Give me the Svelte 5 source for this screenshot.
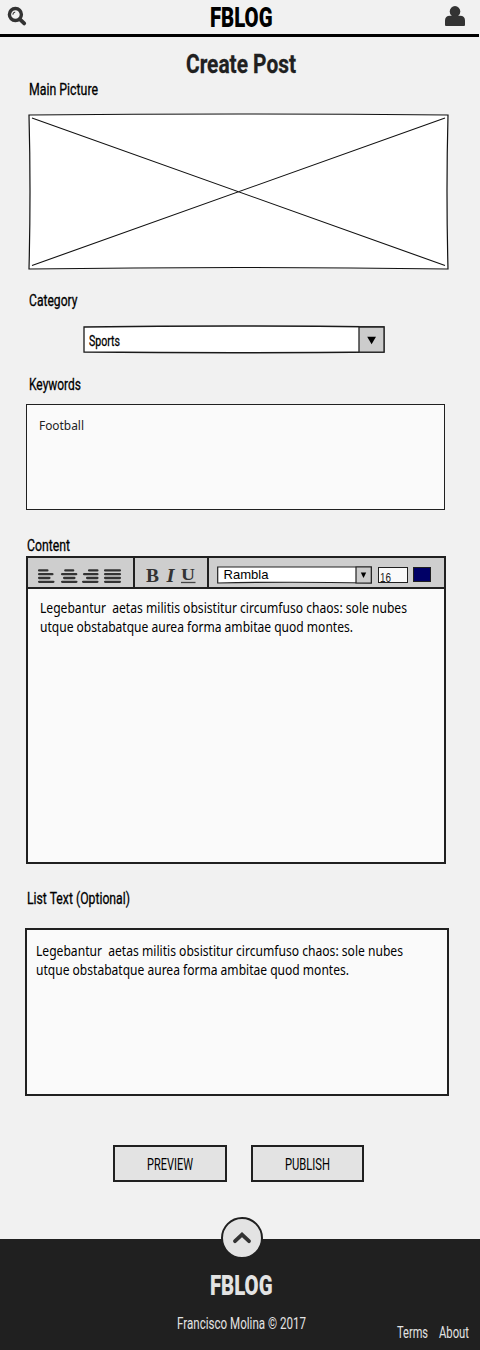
<script>
  const aligns = [
    { w: 23, rows: [[0, 10], [0, 15], [0, 12], [0, 16]] },
    { w: 21, rows: [[3.2, 12.8], [0, 15.8], [2, 14], [0, 16]] },
    { w: 22, rows: [[6, 16], [1, 16], [4, 16], [0, 16]] },
    { w: 17, rows: [[0, 16.5], [0, 16.5], [0, 16.5], [0, 16.5]] }
  ];
  const lines = [
    ['Legebantur  aetas militis obsistitur circumfuso chaos: sole nubes', 367],
    ['utque obstabatque aurea forma ambitae quod montes.', 313]
  ];
</script>

{#snippet fit(text, width, height, baseline, cls)}
  <svg class="fit {cls}" {width} {height}>
    <text x="0" y={baseline} textLength={width} lengthAdjust="spacingAndGlyphs">{text}</text>
  </svg>
{/snippet}

{#snippet paragraph()}
  {#each lines as [text, width]}
    {@render fit(text, width, 19, 14, 'copy')}
  {/each}
{/snippet}

<div class="page">
  <header>
    <svg class="search" width="20" height="20" viewBox="0 0 20 20">
      <circle cx="8.4" cy="7.5" r="6" fill="none" stroke="#333" stroke-width="3.4" />
      <path d="M5.8 7.6Q6 5.4 8.2 5" fill="none" stroke="#333" stroke-width="1.1" />
      <path d="M13 12.3L17.2 16.4" stroke="#333" stroke-width="3.8" stroke-linecap="round" />
    </svg>
    {@render fit('FBLOG', 62.5, 34, 26.8, 'logo')}
    <svg class="user" width="20" height="20" viewBox="0 0 20 20">
      <circle cx="10" cy="5.4" r="5.3" fill="#333" />
      <path d="M0 19V14.500Q0 10 5 9.800H15Q20 10 20 14.500V19Q20 20 19 20H1Q0 20 0 19Z" fill="#333" />
    </svg>
  </header>

  <main>
    <div class="title">{@render fit('Create Post', 110, 43, 35.5, 'heading')}</div>

    <section class="picture-field">
      {@render fit('Main Picture', 69, 33, 14.7, 'label')}
      <svg class="picture" width="422" height="158" viewBox="0 0 422 158">
        <path d="M2 2Q211 0 421 2Q419 78 421 156Q211 153 2 156Q4 78 2 2Z" fill="#fff" stroke="#111" stroke-width="1.2" />
        <path d="M5 5L418 152.500M418 5L5 152.500" fill="none" stroke="#111" stroke-width="1.1" />
      </svg>
    </section>

    <section class="category-field">
      {@render fit('Category', 48.5, 33, 15.4, 'label')}
      <div class="select">
        <svg class="frame" width="303" height="29" viewBox="0 0 303 29">
          <path d="M2 3Q151 1 302 3V28Q151 29.500 2 28Z" fill="#fff" stroke="#1a1a1a" stroke-width="1.3" />
          <path d="M277 2.800L302 3V28L277 28.200Z" fill="#ccc" stroke="#222" stroke-width="1.3" />
          <path d="M285.200 12.800H294L289.600 20.200Z" />
          <text x="7" y="21.500" textLength="31" lengthAdjust="spacingAndGlyphs">Sports</text>
        </svg>
      </div>
    </section>

    <section class="keywords-field">
      {@render fit('Keywords', 52, 29, 14.7, 'label')}
      <div class="keywords">{@render fit('Football', 45, 30, 25, 'light')}</div>
    </section>

    <section class="content-field">
      {@render fit('Content', 43, 21, 15.5, 'label')}
      <div class="editor">
        <div class="toolbar">
          <div class="group aligns">
            {#each aligns as icon}
              <svg width={icon.w} height="15">
                {#each icon.rows as [a, b], i}
                  <path d="M{a + 1.1} {1.4 + i * 3.8}H{b - 0.6}" stroke="#333" stroke-width="2.3" stroke-linecap="round" />
                {/each}
              </svg>
            {/each}
          </div>
          <div class="group styles">
            <svg width="52" height="29">
              <text x="0" y="24.300" font-size="19.500" font-weight="bold" textLength="13" lengthAdjust="spacingAndGlyphs">B</text>
              <text x="20.500" y="24.300" font-size="19.500" font-weight="bold" font-style="italic" textLength="8" lengthAdjust="spacingAndGlyphs">I</text>
              <text x="35" y="22.300" font-size="17" font-weight="bold" textLength="14" lengthAdjust="spacingAndGlyphs">U</text>
              <path d="M35 24.500H49.500" stroke="#444" stroke-width="1.3" />
            </svg>
          </div>
          <div class="group fonts">
            <svg width="155" height="18" viewBox="0 0 155 18">
              <path d="M.7 1H154.300V17Q70 15.500 .7 17Z" fill="#fff" stroke="#222" stroke-width="1.2" />
              <path d="M139 1H154.300V17H139Z" fill="#ccc" stroke="#222" stroke-width="1.2" />
              <path d="M143.800 6.600H149.200L146.500 12Z" />
              <text x="6.500" y="13.400" textLength="45" lengthAdjust="spacingAndGlyphs">Rambla</text>
            </svg>
            <div class="size">{@render fit('16', 11, 14, 14, 'light')}</div>
            <div class="swatch"></div>
          </div>
        </div>
        <div class="editor-body">{@render paragraph()}</div>
      </div>
    </section>

    <section class="list-field">
      {@render fit('List Text (Optional)', 103, 40, 15.5, 'label')}
      <div class="list-box">{@render paragraph()}</div>
    </section>

    <div class="actions">
      <button class="preview">{@render fit('PREVIEW', 46, 33, 23, 'action')}</button>
      <button class="publish">{@render fit('PUBLISH', 45, 33, 23, 'action')}</button>
    </div>
  </main>

  <footer>
    <svg class="top" width="44" height="44" viewBox="0 0 44 44">
      <circle cx="22" cy="22" r="20" fill="#e3e3e3" stroke="#202020" stroke-width="2" />
      <path d="M15 25.200L22 18.600L29 25.200" fill="none" stroke="#333" stroke-width="3.800" stroke-linecap="round" />
    </svg>
    {@render fit('FBLOG', 62.5, 66, 56.3, 'logo pale')}
    <div class="legal">
      {@render fit('Francisco Molina © 2017', 129, 45, 23.5, 'foot')}
      <nav>
        {@render fit('Terms', 31, 45, 32.700, 'foot')}
        {@render fit('About', 30, 45, 32.700, 'foot')}
      </nav>
    </div>
  </footer>
</div>

<style>
  :global(body) { margin: 0; background: #f1f1f1; }
  .page { width: 480px; height: 1350px; display: flex; flex-direction: column; background: #f1f1f1; }
  svg { display: block; flex: none; overflow: visible; }
  .fit { font-family: Roboto, sans-serif; white-space: pre; }
  .fit text { white-space: pre; }
  .logo { font-size: 27px; font-weight: 900; }
  .heading { font-size: 26px; font-weight: 700; fill: #202020; stroke: #202020; stroke-width: .3px; }
  .label { font-size: 16.3px; stroke: #000; stroke-width: .3px; }
  .copy { font-family: "Noto Sans", sans-serif; font-size: 13.5px; }
  .light { font-family: "Noto Sans", sans-serif; font-size: 13px; fill: #222; }
  .action { font-size: 16.5px; }
  .foot { font-size: 16px; fill: #e3e3e3; }
  .pale { fill: #e3e3e3; }

  header { box-sizing: border-box; width: 479px; height: 37px; border-bottom: 3px solid #000; display: flex; justify-content: space-between; padding: 0 14px 0 7px; }
  header .search { margin-top: 7px; }
  header > :global(.logo) { margin-left: 10px; }
  header .user { margin-top: 6px; }

  main { height: 1202px; }
  .title { height: 43px; padding-left: 186px; }
  .picture-field, .category-field, .keywords-field { padding-left: 29px; }
  .picture-field { height: 211px; }
  .picture { margin-left: -2px; }
  .category-field { height: 84px; }
  .select { margin-left: 53px; }
  .select text { font: 14.8px Roboto, sans-serif; stroke: #000; stroke-width: .3px; }
  .keywords-field { height: 160px; }
  .keywords { box-sizing: border-box; width: 419px; height: 106px; margin-left: -3px; padding-left: 12px; border: 1px solid #202020; background: #fafafa; }

  .content-field { padding-left: 26px; height: 353px; }
  .content-field > :global(.label) { margin-left: 1px; }
  .editor { box-sizing: border-box; width: 420px; height: 308px; border: 2px solid #202020; background: #fafafa; }
  .toolbar { display: flex; height: 29px; background: #cecece; border-bottom: 2px solid #202020; }
  .group { display: flex; box-sizing: border-box; height: 29px; }
  .aligns { width: 107px; padding: 11px 0 0 10px; border-right: 2px solid #202020; }
  .styles { width: 74px; padding-left: 11px; border-right: 2px solid #202020; }
  .styles text { font-family: "Liberation Serif", serif; fill: #333; }
  .fonts { padding: 8px 0 0 8px; }
  .fonts text { font-family: "Liberation Sans", sans-serif; font-size: 13px; }
  .size { box-sizing: border-box; width: 30px; height: 16px; margin: 1px 0 0 6px; padding-left: 1px; border: 1px solid #202020; background: #fafafa; }
  .swatch { box-sizing: border-box; width: 18px; height: 15px; margin: 1px 0 0 5px; border: 1px solid #202020; background: #006; }
  .editor-body { padding: 10px 0 0 12px; }

  .list-field { padding-left: 25px; height: 257px; }
  .list-field > :global(.label) { margin-left: 2px; }
  .list-box { box-sizing: border-box; width: 424px; height: 168px; padding: 12px 0 0 9px; border: 2px solid #202020; background: #fafafa; }

  .actions { display: flex; gap: 24px; padding-left: 113px; }
  button { box-sizing: border-box; height: 37px; padding: 0; border: 2px solid #202020; background: #e3e3e3; display: flex; justify-content: center; }
  .preview { width: 114px; }
  .publish { width: 113px; }

  footer { position: relative; height: 111px; background: #202020; display: flex; flex-direction: column; }
  footer .top { position: absolute; left: 220px; top: -23px; }
  footer > :global(.logo) { margin-left: 210px; }
  .legal { display: flex; height: 45px; padding-left: 177px; }
  nav { display: flex; gap: 11px; margin-left: 91px; }
</style>
